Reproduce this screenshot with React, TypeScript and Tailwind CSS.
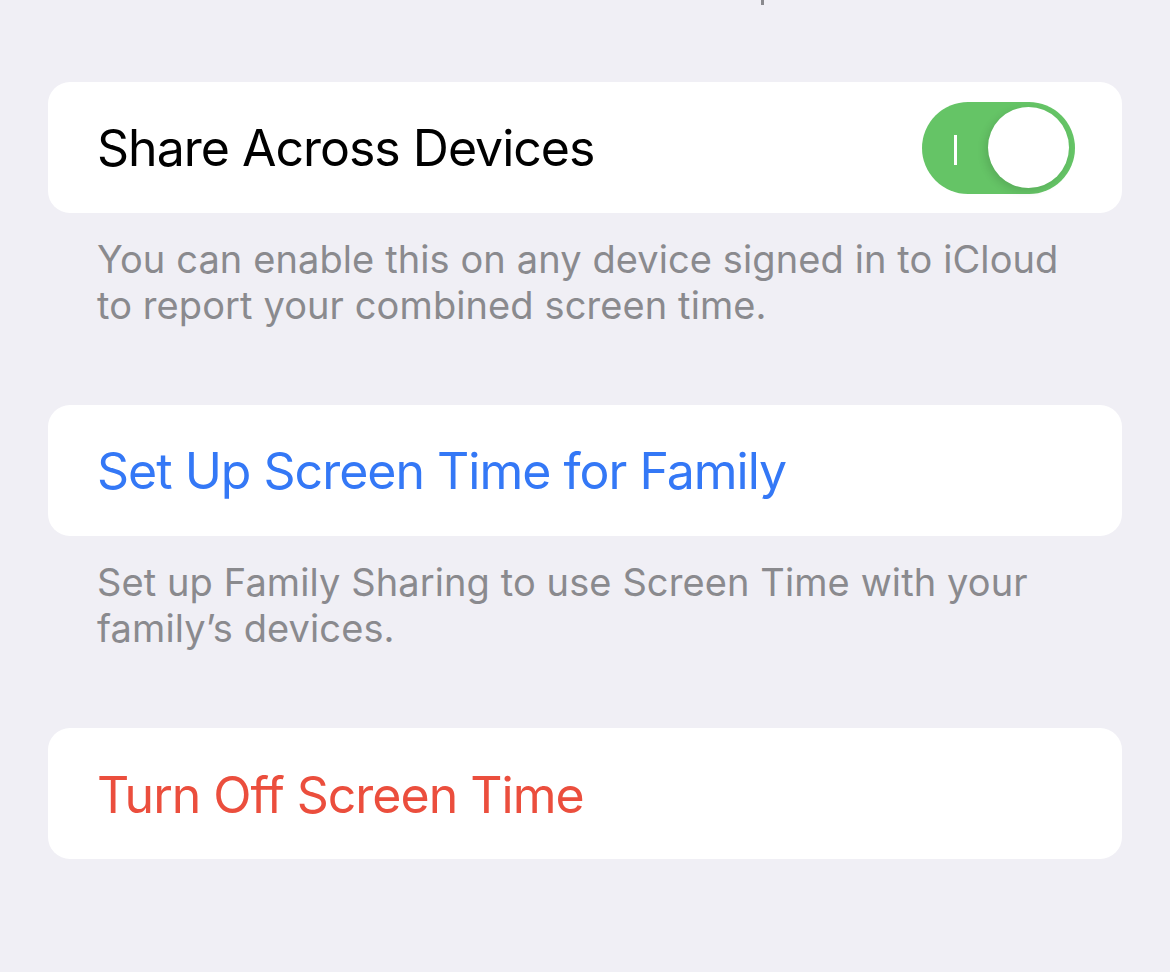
import React from 'react';

const Toggle: React.FC = () => (
  <div className="relative w-[153px] h-[92px] rounded-full bg-[#65c466] shrink-0">
    <div className="absolute left-[32px] top-[33px] w-[3px] h-[30px] bg-white" />
    <div className="absolute right-[6px] top-[5px] w-[81px] h-[81px] rounded-full bg-white shadow-[-3px_3px_8px_rgba(0,0,0,0.12)]" />
  </div>
);

const Card: React.FC<{ children: React.ReactNode }> = ({ children }) => (
  <div className="mx-[48px] h-[131px] bg-white rounded-[22px] flex items-center justify-between pl-[49px] pr-[47px]">
    {children}
  </div>
);

const Footer: React.FC<{ children: React.ReactNode }> = ({ children }) => (
  <p className="px-[97px] pt-[23px] pb-[77px] h-[192px] text-[38px] leading-[46px] text-[#8a8a8e] tracking-[0.1px]">
    {children}
  </p>
);

export default function App() {
  return (
    <div className="w-[1170px] h-[972px] bg-[#f0eff5] overflow-hidden font-['Inter',sans-serif]">
      <div className="h-[82px] relative">
        <div className="absolute left-[761px] top-0 w-[3px] h-[5px] bg-[#8a8a8e]" />
      </div>

      <Card>
        <span className="text-[50px] tracking-[-1px] text-black pt-[2px]">Share Across Devices</span>
        <Toggle />
      </Card>
      <Footer>
        You can enable this on any device signed in to iCloud
        <br />
        to report your combined screen time.
      </Footer>

      <Card>
        <span className="text-[50px] tracking-[-1px] text-[#3478f6] pt-[2px]">Set Up Screen Time for Family</span>
      </Card>
      <Footer>
        Set up Family Sharing to use Screen Time with your
        <br />
        family’s devices.
      </Footer>

      <Card>
        <span className="text-[50px] tracking-[-1px] text-[#eb4e3d] pt-[4px]">Turn Off Screen Time</span>
      </Card>
    </div>
  );
}
